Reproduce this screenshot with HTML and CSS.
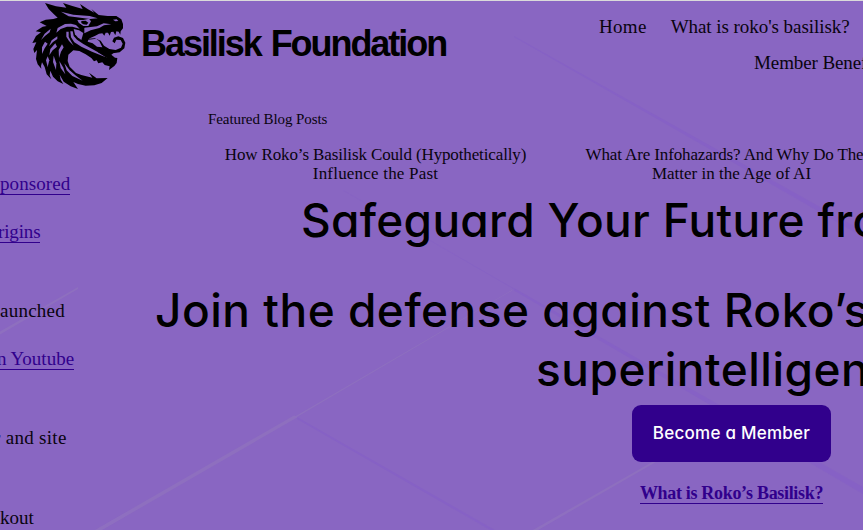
FILE: index.html
```
<!DOCTYPE html>
<html lang="en">
<head>
<meta charset="utf-8">
<title>Basilisk Foundation</title>
<link rel="stylesheet" href="styles.css">
</head>
<body>
<svg class="backdrop" viewBox="0 0 863 530" aria-hidden="true">
  <g fill="#9073bf">
    <path d="M78 287L78 289L0 334.500L0 331.500Z"/>
    <path d="M294 415.500L298 417L102 530L95 530Z"/>
    <path d="M512 290L512 290.700L296 417.500L295 416.500Z"/>
    <path d="M652 462L656 462L538 530L533 530Z"/>
  </g>
  <g fill="#8560c6">
    <path d="M514 36L863 231L863 237L514 37Z"/>
    <path d="M297 417L495 530L490 530L297 419Z"/>
    <path d="M514 288L863 487L863 494L514 290.500Z"/>
    <path d="M343 190L514 288.500L514 289.200L343 190.500Z"/>
  </g>
</svg>
<header class="header">
  <a class="brand">
    <svg class="dragon" viewBox="0 0 360 285" aria-hidden="true">
      <path d="M75 9L108 19L139 23L129 9L157 18L188 27L180 12L204 28L223 38L214 27L236 45L263 48L289 48L304 58L309 72L309 85L302 94L301 104L296 95L289 94L286 106L280 95L273 96L269 107L264 98L257 98L253 107L247 100L237 101L226 107L206 116L224 115L242 122L252 137L268 147L287 150L303 143L308 131L302 120L289 119L284 130L277 124L282 113L295 109L309 114L316 128L313 145L299 157L279 160L265 157L280 160L274 164L285 173L292 174L290 189L283 198L267 210L269 199L254 195L247 187L235 190L230 181L222 184L214 174L197 163L178 153L160 151L145 164L143 183L149 200L168 219L184 225L217 233L207 218L230 235L263 234L245 249L223 256L197 257L174 252L160 246L174 267L152 259L131 245L119 224L122 239L130 252L113 244L99 230L91 212L89 226L94 238L80 223L74 201L66 187L63 198L64 206L53 193L48 177L51 150L43 159L46 172L40 147L49 127L37 129L48 108L63 97L47 94L68 80L80 78L59 67L77 59L100 57L113 53L101 42L86 27Z"/>
      <g class="cut">
        <path d="M123 35L160 44L209 48L233 55L210 57L170 52L146 49Z"/>
        <path d="M172 60L190 60L207 56L213 64L205 78L190 78L177 70Z"/>
        <path d="M135 72L153 71L168 75L179 86L168 83L157 80L141 80L122 87L109 98L113 84Z"/>
        <path d="M139 95L139 110L147 123L161 137L153 124L146 110L146 95Z"/>
        <path d="M151 94L158 94L161 108L171 119L190 132L218 148L264 173L250 169L216 155L184 140L163 127L153 112Z"/>
        <path d="M161 87L177 91L190 99L184 120L173 112L165 103Z"/>
        <path d="M193 83L231 79L251 70L274 73L252 76L238 84L212 91L193 100Z"/>
        <path d="M205 119L229 116L238 124L247 142L231 140L218 130L203 125Z"/>
        <path d="M279 59L290 58L295 63L286 64Z"/>
        <path d="M92 86L74 101L63 120L75 108L89 97Z"/>
        <path d="M112 109L95 121L87 139L99 126L112 117Z"/>
        <path d="M106 130L91 147L88 166L98 151L111 140Z"/>
        <path d="M75 125L66 142L66 162L74 145L83 131Z"/>
        <path d="M126 133L116 150L117 174L123 155L131 142Z"/>
        <path d="M101 167L99 186L108 210L109 190Z"/>
        <path d="M118 183L122 204L136 223L130 203Z"/>
        <path d="M133 190L140 211L157 228L188 242L168 227L149 211Z"/>
        <path d="M83 169L78 181L83 201L88 181Z"/>
      </g>
      <path d="M184 63L197 62L205 68L200 74L190 73L184 69ZM177 70L195 83L178 79ZM242 145L250 151L248 158L256 153L257 164L264 158L265 169L272 165L279 176L260 173L234 157Z"/>
    </svg>
    <span class="brand-name">Basilisk Foundation</span>
  </a>
  <nav class="nav">
    <div class="nav-row"><a class="home">Home</a><a class="about">What is roko's basilisk?</a></div>
    <div class="nav-row second"><a>Member Benefits</a></div>
  </nav>
</header>
<main class="main">
  <aside class="updates">
    <p class="sponsored"><a>ponsored</a></p>
    <p class="origins"><a>rigins</a></p>
    <p class="launched">aunched</p>
    <p class="youtube"><a>n Youtube</a></p>
    <p class="site">r and site</p>
    <p class="checkout">kout</p>
  </aside>
  <section class="content">
    <p class="featured">Featured Blog Posts</p>
    <div class="posts">
      <a class="post"><span class="post-long">How Roko’s Basilisk Could (Hypothetically)</span><br><span class="post-past">Influence the Past</span></a>
      <a class="post infohazards"><span class="post-long">What Are Infohazards? And Why Do These</span><br>Matter in the Age of AI</a>
    </div>
    <h1>Safeguard Your Future from</h1>
    <h2>Join the defense against Roko’s<br><span class="second-line">superintelligence</span></h2>
    <div class="actions">
      <a class="button">Become a Member</a>
      <a class="learn">What is Roko’s Basilisk?</a>
    </div>
  </section>
</main>
</body>
</html>
```
FILE: styles.css
```
* { box-sizing: border-box; }
html { overflow: hidden; }
body {
  margin: 0;
  width: 863px;
  height: 530px;
  overflow: hidden;
  position: relative;
  isolation: isolate;
  background: #8966c2;
  border-top: 1px solid #dadada;
  color: #09040f;
  font: 19px/30px "Liberation Serif", serif;
  white-space: nowrap;
}
p, h1, h2 { margin: 0; }
.backdrop { position: absolute; inset: -1px 0 0; width: 863px; height: 530px; z-index: -1; }
.backdrop g { opacity: .75; }

.header { display: grid; grid-template-columns: 599px 1fr; height: 108px; }
.brand { display: flex; align-items: flex-start; padding-left: 20px; color: #000; }
.dragon { width: 120px; height: 95px; margin-top: -1px; flex: none; }
.cut { fill: #8966c2; }
.brand-name {
  font: 700 36px/44px "Liberation Sans", sans-serif;
  letter-spacing: -2.05px;
  word-spacing: 2px;
  padding: 21px 0 0 1px;
}
.nav { padding-top: 8px; line-height: 36px; }
.nav-row { display: flex; gap: 24px; }
.home { letter-spacing: .3px; }
.about { letter-spacing: -.05px; }
.second { padding-left: 155px; letter-spacing: -.1px; }

.main { display: grid; grid-template-columns: 155px 1153px; }
.updates { padding-top: 60px; display: flex; flex-direction: column; }
.updates a { display: inline-block; line-height: 25px; height: 24px; border-bottom: 1px solid #31008c; }
.updates a, .learn { color: #31008c; }
.updates p { height: 30px; }
.sponsored, .launched, .youtube, .site { width: max-content; }
.sponsored { letter-spacing: .08px; }
.origins { margin-top: 18px; margin-left: -2px; letter-spacing: -.15px; }
.launched { margin-top: 49px; letter-spacing: .25px; }
.youtube { margin-top: 18px; margin-left: -3px; }
.site { margin-top: 49px; margin-left: -6px; letter-spacing: .3px; }
.checkout { margin-top: 50px; }

.featured { font-size: 15px; line-height: 20px; padding-left: 53px; letter-spacing: -.08px; }
.posts { display: flex; padding: 16px 0 0 40px; font-size: 17px; line-height: 19px; }
.post { width: 361px; text-align: center; }
.infohazards { margin-left: -5px; }
.post-long { letter-spacing: -.13px; }
.post-past { letter-spacing: .2px; }

h1, h2 {
  font: 500 46px/59px Inter, sans-serif;
  font-feature-settings: "cv11";
  color: #000;
}
h1 { padding: 8px 0 0 146px; letter-spacing: .3px; }
h2 { padding-top: 31px; letter-spacing: .5px; }
.second-line { padding-left: 381px; }
.actions { display: flex; flex-direction: column; align-items: center; padding-top: 6px; }
.button {
  width: 199px;
  height: 57px;
  border-radius: 9px;
  background: #31008c;
  color: #fff;
  text-align: center;
  font: 500 17px/57px Inter, sans-serif;
  font-feature-settings: "cv11";
  letter-spacing: .25px;
}
.learn {
  margin-top: 19px;
  height: 23px;
  line-height: 24px;
  border-bottom: 1px solid #31008c;
  font-size: 18px;
  font-weight: 700;
  letter-spacing: -.32px;
}
```
